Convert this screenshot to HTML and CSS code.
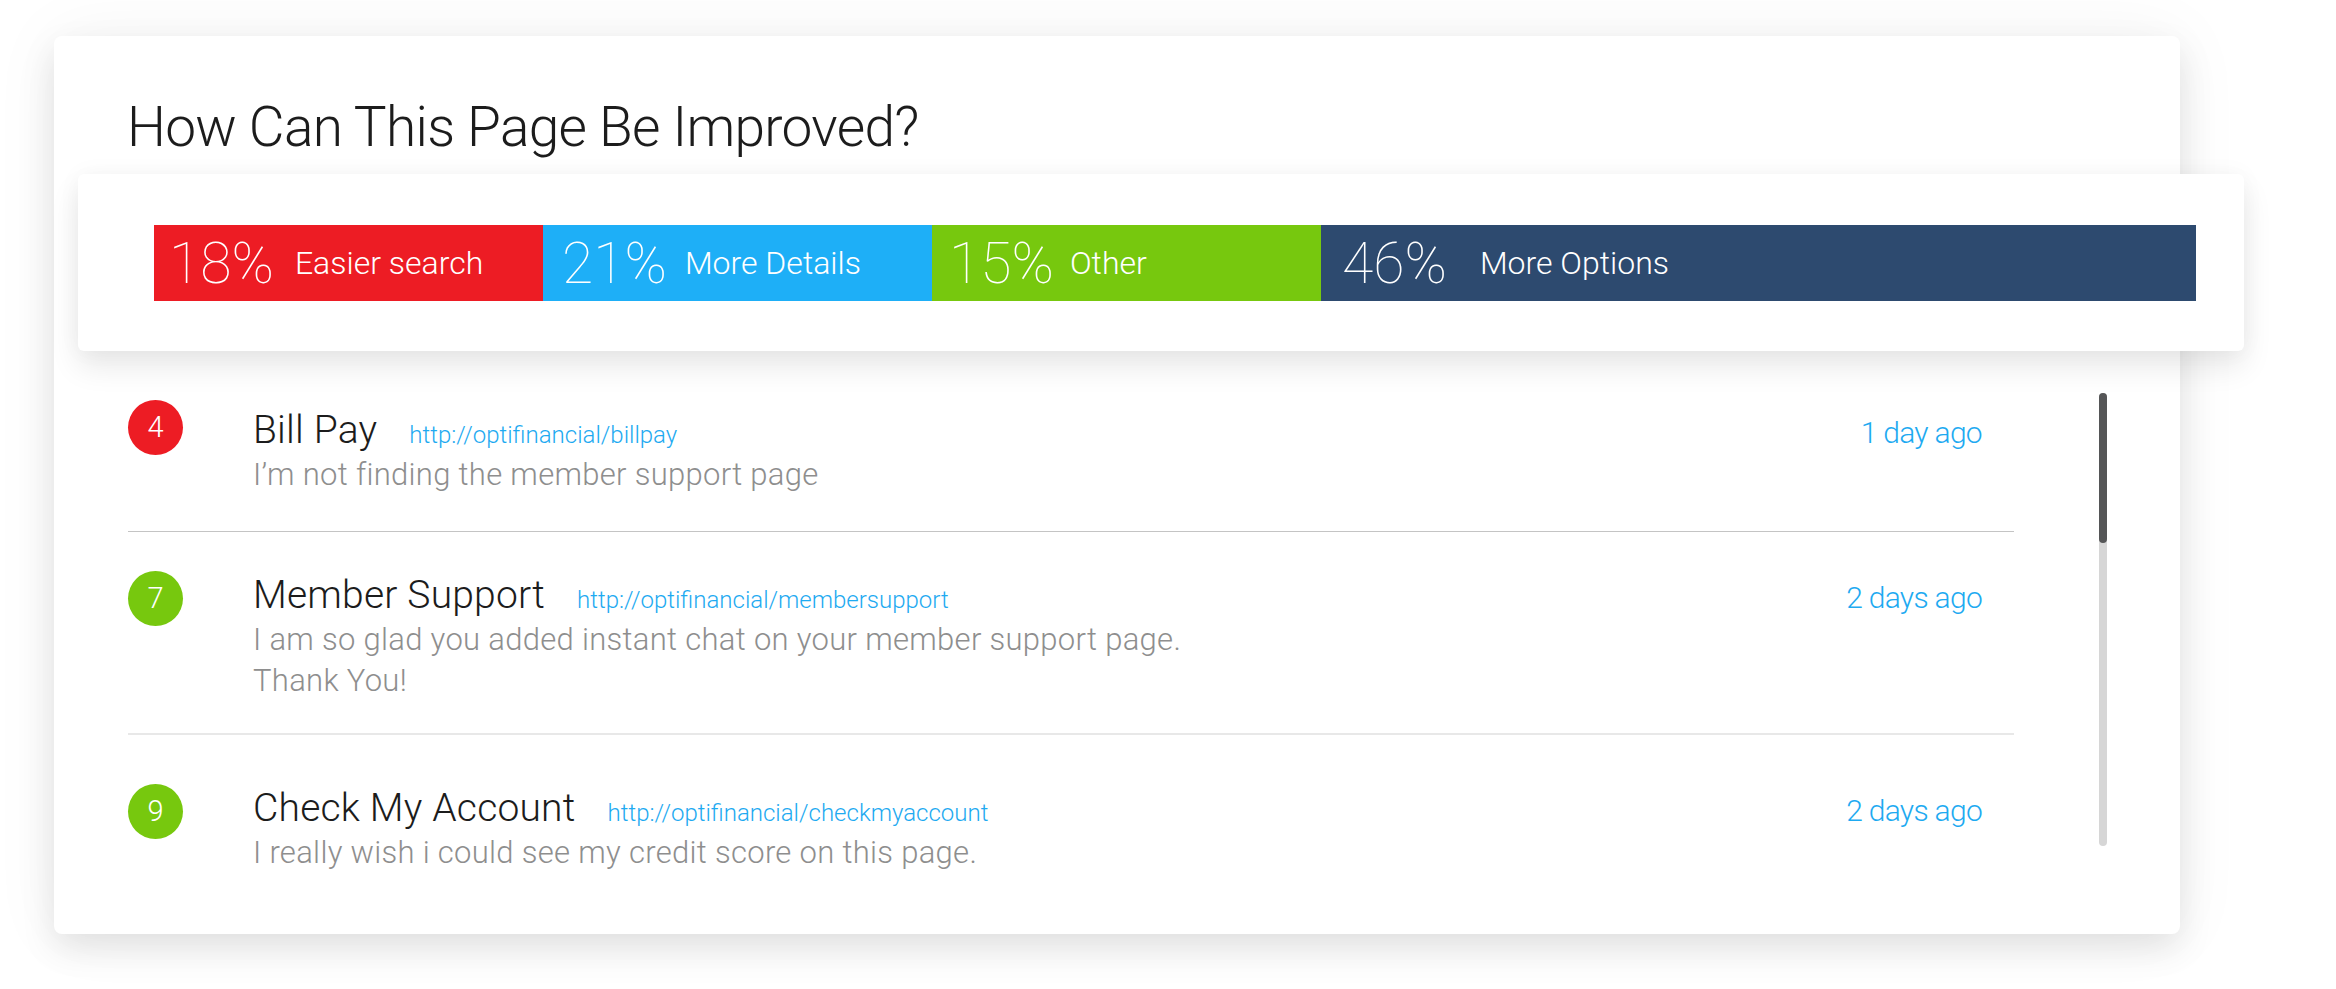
FILE: index.html
```html
<!DOCTYPE html>
<html lang="en">
<head>
<meta charset="utf-8">
<title>How Can This Page Be Improved?</title>
<link rel="stylesheet" href="styles.css">
</head>
<body>
<div class="card">
  <h1 class="title">How Can This Page Be Improved?</h1>
  <div class="panel">
    <div class="bar">
      <div class="seg seg--red"><span class="pct">18%</span><span class="label">Easier search</span></div>
      <div class="seg seg--blue"><span class="pct">21%</span><span class="label">More Details</span></div>
      <div class="seg seg--green"><span class="pct">15%</span><span class="label">Other</span></div>
      <div class="seg seg--navy"><span class="pct">46%</span><span class="label">More Options</span></div>
    </div>
  </div>
  <div class="feed">
    <div class="rows">
      <div class="row row--one">
        <div class="badge badge--red">4</div>
        <div class="body">
          <div class="head"><span class="name">Bill Pay</span><span class="url">http://optifinancial/billpay</span><span class="time">1 day ago</span></div>
          <p class="msg">I’m not finding the member support page</p>
        </div>
      </div>
      <div class="row row--two">
        <div class="badge badge--green">7</div>
        <div class="body">
          <div class="head"><span class="name">Member Support</span><span class="url">http://optifinancial/membersupport</span><span class="time">2 days ago</span></div>
          <p class="msg">I am so glad you added instant chat on your member support page.<br>Thank You!</p>
        </div>
      </div>
      <div class="row row--three">
        <div class="badge badge--green">9</div>
        <div class="body">
          <div class="head"><span class="name">Check My Account</span><span class="url">http://optifinancial/checkmyaccount</span><span class="time">2 days ago</span></div>
          <p class="msg">I really wish i could see my credit score on this page.</p>
        </div>
      </div>
    </div>
    <div class="scroll"><div class="thumb"></div></div>
  </div>
</div>
</body>
</html>
```
FILE: styles.css
```css
* { box-sizing: border-box; }
html, body {
  margin: 0;
  padding: 0;
  background: #ffffff;
}
body {
  font-family: Roboto, "Liberation Sans", sans-serif;
  font-weight: 300;
  width: 2336px;
  height: 989px;
  overflow: hidden;
}
.card {
  margin: 36px 0 0 54px;
  width: 2126px;
  height: 898px;
  background: #fff;
  border-radius: 8px;
  padding: 59px 0 0 0;
  box-shadow: 0 14px 34px rgba(0,0,0,0.10), 0 0 70px rgba(0,0,0,0.05);
}
.title {
  margin: 0 0 15px 73px;
  font-size: 55px;
  line-height: 64px;
  font-weight: 300;
  letter-spacing: -0.7px;
  color: #1c1c1c;
}
.panel {
  margin: 0 -64px 0 24px;
  height: 177px;
  padding: 51px 48px 50px 76px;
  background: #fff;
  border-radius: 6px;
  box-shadow: 0 16px 30px rgba(0,0,0,0.09), 0 0 24px rgba(0,0,0,0.04);
}
.bar {
  display: flex;
  height: 76px;
}
.seg {
  display: flex;
  align-items: center;
  gap: 21px;
  padding-left: 15px;
  color: #fff;
  width: 389px;
  flex-shrink: 0;
}
.seg--red { background: #ed1c24; }
.seg--blue { background: #1eaff7; padding-left: 19px; gap: 18px; }
.seg--green { background: #77c80e; padding-left: 17px; gap: 16px; }
.seg--navy { background: #2d4a6f; flex: 1; width: auto; padding-left: 21px; gap: 33px; }
.pct {
  font-size: 57px;
  font-weight: 100;
  line-height: 1;
}
.label {
  font-size: 32px;
  font-weight: 300;
  line-height: 1;
}
.feed {
  display: flex;
  margin: 42px 0 0 74px;
}
.rows {
  width: 1886px;
  flex-shrink: 0;
}
.row {
  display: flex;
  align-items: flex-start;
  padding-right: 32px;
}
.row--one {
  padding-top: 7px;
  padding-bottom: 36px;
  border-bottom: 1px solid #c4c4c4;
}
.row--one .body { padding-top: 6px; }
.row--two {
  padding-top: 39px;
  padding-bottom: 32px;
  border-bottom: 2px solid #e8e8e8;
}
.row--three {
  padding-top: 49px;
}
.badge {
  width: 55px;
  height: 55px;
  border-radius: 50%;
  flex-shrink: 0;
  display: flex;
  align-items: center;
  justify-content: center;
  color: #fff;
  font-size: 29px;
  font-weight: 300;
  line-height: 1;
}
.badge--red { background: #ed1c24; }
.badge--green { background: #77c80e; }
.body {
  flex: 1;
  margin-left: 70px;
}
.head {
  display: flex;
  align-items: baseline;
}
.name {
  font-size: 39px;
  line-height: 48px;
  color: #1c1c1c;
  font-weight: 300;
  letter-spacing: 0.2px;
}
.url {
  margin-left: 32px;
  font-size: 24px;
  color: #1eaaf1;
  font-weight: 300;
}
.time {
  margin-left: auto;
  font-size: 30px;
  letter-spacing: -0.7px;
  color: #1eaaf1;
  font-weight: 300;
}
.msg {
  margin: 0;
  font-size: 31px;
  line-height: 41px;
  letter-spacing: 0.3px;
  color: #8e8e8e;
  font-weight: 300;
}
.scroll {
  margin-left: 85px;
  width: 8px;
  height: 453px;
  border-radius: 4px;
  background: #d6d6d6;
  flex-shrink: 0;
}
.thumb {
  height: 150px;
  border-radius: 4px;
  background: #555657;
}
```
